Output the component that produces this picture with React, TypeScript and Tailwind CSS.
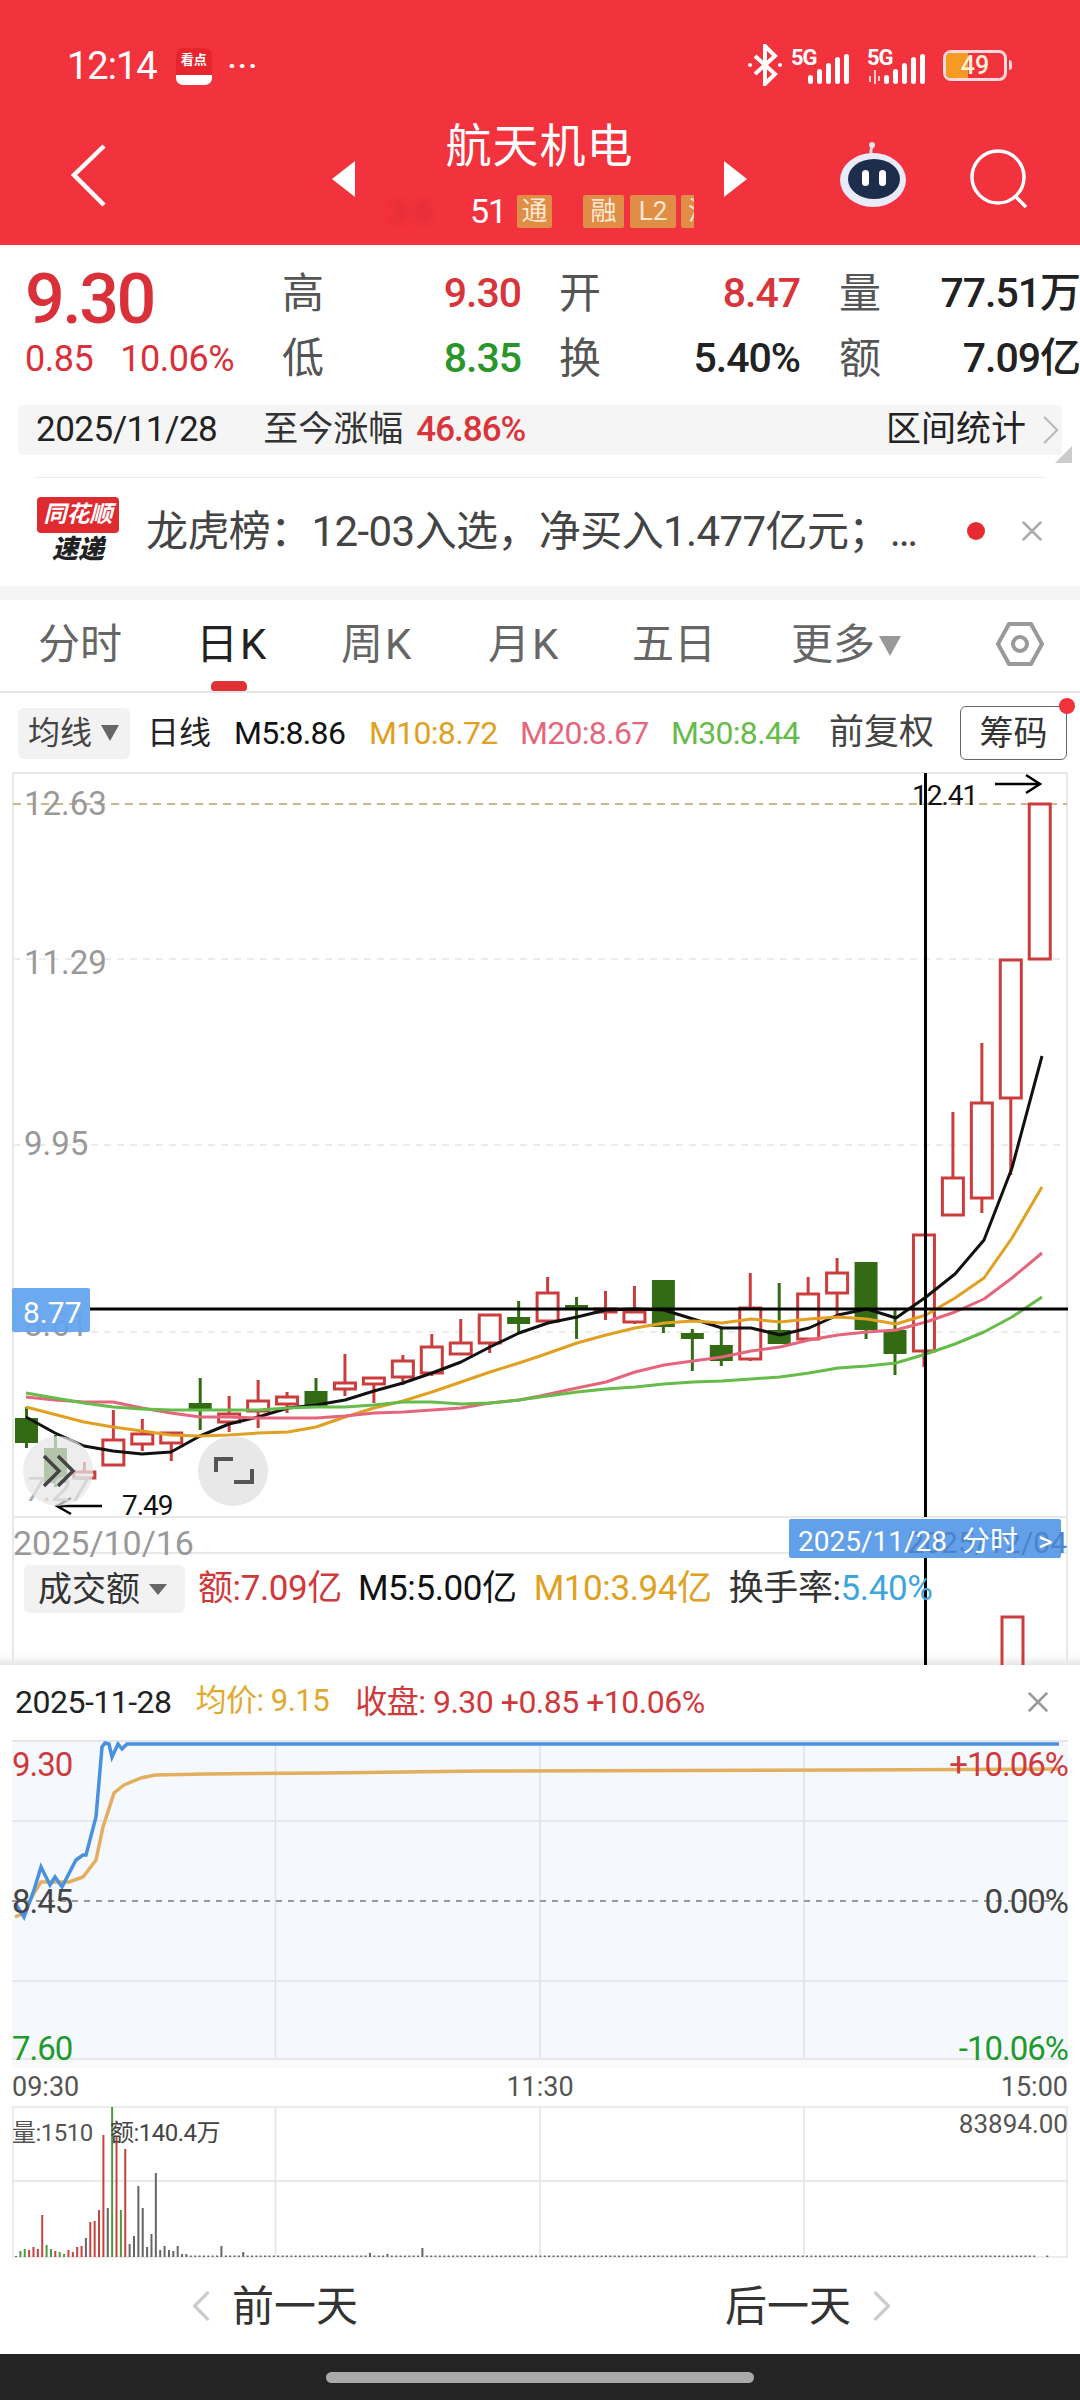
import { ChevronLeft, ChevronRight, X } from "lucide-react";

const RED = "#d8333a";
const ORANGE = "#e0a022";
const PINK = "#e5667c";
const GREEN = "#66bb4a";

// wickTop, wickBottom, bodyTop, bodyBottom, rising
const candles: [number, number, number, number, boolean][] = [
  [1407, 1448, 1418, 1443, false],
  [1435, 1487, 1448, 1483, false],
  [1462, 1480, 1472, 1478, true],
  [1410, 1465, 1440, 1465, true],
  [1419, 1451, 1434, 1444, true],
  [1433, 1461, 1433, 1443, true],
  [1378, 1430, 1403, 1409, false],
  [1396, 1432, 1414, 1422, true],
  [1380, 1428, 1401, 1411, true],
  [1392, 1413, 1397, 1404, true],
  [1378, 1407, 1391, 1406, false],
  [1354, 1396, 1383, 1389, true],
  [1378, 1403, 1378, 1384, true],
  [1355, 1385, 1361, 1377, true],
  [1334, 1376, 1347, 1373, true],
  [1319, 1354, 1343, 1354, true],
  [1315, 1353, 1315, 1343, true],
  [1301, 1333, 1317, 1324, false],
  [1277, 1321, 1293, 1321, true],
  [1297, 1339, 1305, 1309, false],
  [1291, 1320, 1309, 1311, true],
  [1286, 1324, 1312, 1322, true],
  [1280, 1333, 1280, 1327, false],
  [1329, 1371, 1333, 1339, false],
  [1328, 1366, 1345, 1361, false],
  [1273, 1361, 1308, 1359, true],
  [1283, 1344, 1330, 1344, false],
  [1277, 1339, 1294, 1339, true],
  [1258, 1315, 1273, 1293, true],
  [1262, 1339, 1262, 1330, false],
  [1310, 1375, 1330, 1354, false],
  [1235, 1367, 1235, 1351, true],
  [1112, 1215, 1178, 1215, true],
  [1043, 1213, 1103, 1198, true],
  [960, 1175, 960, 1098, true],
  [804, 959, 804, 959, true],
];

const maLines = [
  {
    color: "#111111",
    width: 3,
    points:
      "26,1417 55,1433 84,1446 113,1451 142,1454 171,1452 200,1436 229,1424 258,1417 288,1408 316,1405 345,1400 374,1391 403,1383 432,1373 461,1362 490,1347 519,1333 548,1323 577,1317 606,1310 635,1309 664,1310 693,1319 722,1328 751,1328 780,1335 809,1328 838,1315 867,1309 896,1318 926,1297 955,1274 984,1240 1012,1168 1042,1056",
  },
  {
    color: ORANGE,
    width: 3,
    points:
      "26,1407 84,1422 113,1427 142,1431 171,1435 200,1436 229,1435 258,1433 288,1432 316,1427 345,1417 374,1408 403,1401 432,1392 461,1382 490,1372 519,1363 540,1356 577,1343 606,1335 635,1328 664,1323 693,1321 722,1323 751,1319 780,1322 809,1319 838,1317 867,1319 896,1324 926,1315 955,1298 984,1278 1012,1238 1042,1187",
  },
  {
    color: PINK,
    width: 3,
    points:
      "26,1397 55,1400 84,1402 113,1402 142,1408 171,1413 200,1417 229,1417 258,1418 288,1418 316,1418 345,1416 374,1413 403,1412 432,1410 461,1408 490,1403 519,1400 540,1396 577,1388 606,1382 635,1372 664,1365 693,1361 722,1357 751,1351 780,1347 809,1340 838,1335 867,1332 896,1330 926,1322 955,1312 984,1299 1012,1278 1042,1253",
  },
  {
    color: GREEN,
    width: 3,
    points:
      "26,1393 55,1398 84,1403 113,1407 142,1409 171,1410 200,1410 229,1410 258,1410 288,1408 316,1407 345,1407 374,1405 403,1402 432,1402 461,1404 490,1403 519,1400 540,1397 577,1392 606,1389 635,1387 664,1384 693,1382 722,1381 751,1379 780,1377 809,1373 838,1368 867,1366 896,1363 926,1354 955,1344 984,1332 1012,1317 1042,1297",
  },
];

const bluePath =
  "15,1903 24,1917 34,1890 41,1867 50,1885 55,1877 62,1887 76,1860 83,1855 86,1855 96,1817 102,1747 105,1743 109,1744 112,1757 118,1744 122,1749 127,1744 1059,1744";
const goldPath =
  "15,1917 24,1913 34,1893 41,1882 69,1882 83,1877 96,1860 103,1827 114,1793 124,1785 141,1778 155,1775 207,1774 324,1773 482,1771 847,1770 1059,1769";

// bar heights for the first 40 minutes of the session
const volumes: [number, string][] = [
  [1, "#666"], [6, "#4d9a3a"], [8, "#4d9a3a"], [7, "#c8403f"], [10, "#c8403f"], [8, "#c8403f"],
  [42, "#c8403f"], [12, "#4d9a3a"], [8, "#4d9a3a"], [6, "#c8403f"], [5, "#4d9a3a"], [3, "#4d9a3a"],
  [7, "#c8403f"], [5, "#c8403f"], [10, "#c8403f"], [11, "#c8403f"], [19, "#666"], [35, "#c8403f"],
  [36, "#c8403f"], [47, "#c8403f"], [122, "#c8403f"], [49, "#666"], [150, "#4d9a3a"], [120, "#c8403f"],
  [47, "#4d9a3a"], [108, "#c8403f"], [13, "#666"], [21, "#666"], [71, "#666"], [49, "#666"],
  [10, "#666"], [23, "#666"], [84, "#666"], [7, "#666"], [11, "#666"], [7, "#666"],
  [6, "#666"], [11, "#666"], [3, "#666"], [3, "#666"],
];

function quietVolume(i: number) {
  if (i === 47) return 11;
  if (i === 52) return 5;
  if (i === 81) return 4;
  if (i === 85) return 3;
  if (i === 93) return 9;
  return 1.5;
}

function Signal({ wave }: { wave?: boolean }) {
  return (
    <svg width="64" height="38" viewBox="0 0 64 38" fill="white">
      <text x="0" y="19" fontSize="22" fontWeight="700" letterSpacing="-1">
        5G
      </text>
      {wave && <path d="M3 36v-6M8 38V24M12 35v-5" stroke="white" strokeWidth="1.5" />}
      <rect x="17" y="29" width="5" height="9" rx="2.5" />
      <rect x="26" y="23" width="5" height="15" rx="2.5" />
      <rect x="35" y="17" width="5" height="21" rx="2.5" />
      <rect x="44" y="11" width="5" height="27" rx="2.5" />
      <rect x="53" y="8" width="5" height="30" rx="2.5" />
    </svg>
  );
}

function Robot() {
  return (
    <svg width="70" height="66" viewBox="0 0 70 66">
      <path d="M34 14c-2-4-1-8 1-10" stroke="#f5dfe6" strokeWidth="3" fill="none" />
      <circle cx="34" cy="3" r="3" fill="#f5dfe6" />
      <ellipse cx="35" cy="38" rx="33" ry="27" fill="#e9ecf8" />
      <ellipse cx="36" cy="37" rx="26" ry="20" fill="#1f2d4d" />
      <rect x="24" y="28" width="7" height="16" rx="3.5" fill="white" />
      <rect x="41" y="28" width="7" height="16" rx="3.5" fill="white" />
    </svg>
  );
}

function Badge({ label, width }: { label: string; width: string }) {
  return (
    <span className={`flex h-[33px] shrink-0 items-center justify-center overflow-hidden rounded-[2px] bg-[#e08d45] text-[26px] text-[#fde7d3] ${width}`}>
      {label}
    </span>
  );
}

function Header() {
  return (
    <header className="h-[245px] bg-[#f2323c] text-white">
      <div className="flex h-[120px] items-start justify-between pl-[67px] pr-[68px] pt-[44px]">
        <div className="flex items-center">
          <span className="text-[38px] leading-[44px] tracking-[-1px]">12:14</span>
          <div className="ml-[19px] flex h-[37px] w-[36px] flex-col overflow-hidden rounded-[7px] bg-[#e8242c]">
            <span className="flex-1 text-center text-[13px] font-bold leading-[24px]">看点</span>
            <span className="h-[10px] bg-white" />
          </div>
          <span className="ml-[16px] text-[28px] font-bold leading-[20px] tracking-[2px]">···</span>
        </div>
        <div className="flex items-center">
          <svg width="36" height="42" viewBox="0 0 36 42" fill="none" stroke="white" strokeWidth="4">
            <path d="M8 12l20 18-10 10V2l10 10L8 30" />
            <circle cx="3" cy="21" r="2" fill="white" stroke="none" />
            <circle cx="33" cy="21" r="2" fill="white" stroke="none" />
          </svg>
          <span className="ml-[8px]">
            <Signal />
          </span>
          <span className="ml-[12px]">
            <Signal wave />
          </span>
          <div className="ml-[12px] flex items-center">
            <div className="relative h-[31px] w-[64px] rounded-[8px] border-[3px] border-[#fbd9dc]">
              <div className="h-full w-[22px] rounded-l-[4px] bg-[#f59a23]" />
              <span className="absolute inset-0 text-center text-[25px] font-medium leading-[25px] text-[#fff2d8]">49</span>
            </div>
            <span className="ml-[2px] h-[10px] w-[3px] rounded-r-full bg-[#fbd9dc]" />
          </div>
        </div>
      </div>
      <div className="flex h-[125px] items-start pl-[60px]">
        <svg width="56" height="76" viewBox="0 0 56 76" fill="none" stroke="white" strokeWidth="4.5" className="mt-[18px] shrink-0">
          <path d="M44 8L14 37l30 30" />
        </svg>
        <span className="ml-[216px] mt-[41px] h-0 w-0 border-y-[18px] border-r-[23px] border-y-transparent border-r-white" />
        <div className="flex w-[369px] flex-col items-center">
          <span className="text-[46px] leading-[52px] tracking-[1px]">航天机电</span>
          <div className="mt-[23px] flex w-[339px] items-center self-start overflow-hidden pl-[35px]">
            <span className="w-[80px] shrink-0 text-[30px] leading-[33px] text-[#d92b35] blur-[3px]">3·6</span>
            <span className="w-[36px] shrink-0 text-[34px] leading-[33px] tracking-[-1px]">51</span>
            <span className="ml-[11px] shrink-0"><Badge label="通" width="w-[35px]" /></span>
            <span className="ml-[31px] shrink-0"><Badge label="融" width="w-[41px]" /></span>
            <span className="ml-[6px] shrink-0"><Badge label="L2" width="w-[46px]" /></span>
            <span className="ml-[5px] shrink-0"><Badge label="沪" width="w-[40px]" /></span>
          </div>
        </div>
        <span className="mt-[41px] h-0 w-0 border-y-[18px] border-l-[23px] border-y-transparent border-l-white" />
        <span className="ml-[91px] mt-[22px]">
          <Robot />
        </span>
        <svg width="60" height="62" viewBox="0 0 60 62" fill="none" stroke="white" strokeWidth="3.5" className="ml-[61px] mt-[28px]">
          <circle cx="29" cy="29" r="26" />
          <path d="M46 48l11 11" />
        </svg>
      </div>
    </header>
  );
}

function QuoteCell({ label, value, color, gap }: { label: string; value: string; color: string; gap?: boolean }) {
  return (
    <>
      <span className={`text-[42px] text-[#555] ${gap ? "text-right" : ""}`}>{label}</span>
      <span className={`whitespace-nowrap text-right text-[41px] font-medium tracking-[-1px] ${color}`}>{value}</span>
    </>
  );
}

function Quote() {
  return (
    <section className="h-[341px] overflow-hidden bg-white">
      <div className="flex h-[160px] pt-[16px]">
        <div className="w-[282px] pl-[25px]">
          <div className="text-[70px] font-medium leading-[76px] tracking-[-2.5px] text-[#d9303a]">9.30</div>
          <div className="mt-[1px] flex gap-[27px] text-[36px] leading-[42px] tracking-[-0.5px] text-[#d9303a]">
            <span>0.85</span>
            <span>10.06%</span>
          </div>
        </div>
        <div className="grid h-[130px] grid-cols-[42px_197px_80px_199px_81px_199px] grid-rows-[65px_65px] items-center leading-[65px]">
          <QuoteCell label="高" value="9.30" color="text-[#d9343a]" />
          <QuoteCell label="开" value="8.47" color="text-[#d9343a]" gap />
          <QuoteCell label="量" value="77.51万" color="text-[#222]" gap />
          <QuoteCell label="低" value="8.35" color="text-[#2a962a]" />
          <QuoteCell label="换" value="5.40%" color="text-[#222]" gap />
          <QuoteCell label="额" value="7.09亿" color="text-[#222]" gap />
        </div>
      </div>
      <div className="relative mx-[18px] flex h-[50px] items-center rounded-[4px] bg-[#f5f5f5] pl-[18px] text-[35px] text-[#222]">
        <span className="tracking-[-0.5px]">2025/11/28</span>
        <span className="ml-[46px] text-[#333]">至今涨幅</span>
        <span className="ml-[13px] font-medium tracking-[-1px] text-[#d9343a]">46.86%</span>
        <span className="ml-auto mr-[36px] text-[#222]">区间统计</span>
        <ChevronRight size={50} strokeWidth={1.1} className="absolute right-[-14px] text-[#bbb]" />
        <span className="absolute bottom-[-8px] right-[-10px] h-0 w-0 border-b-[17px] border-l-[17px] border-b-[#ccc] border-l-transparent" />
      </div>
      <div className="mx-[35px] mt-[22px] h-px bg-[#ececec]" />
      <div className="flex h-[106px] items-center pl-[37px]">
        <div className="flex h-[68px] w-[82px] shrink-0 flex-col items-center">
          <span className="w-full rounded-[4px] bg-[#df2a30] text-center text-[23px] font-bold italic leading-[36px] text-white">同花顺</span>
          <span className="text-[26px] font-black italic leading-[32px] text-[#222]">速递</span>
        </div>
        <span className="ml-[27px] w-[785px] shrink-0 whitespace-nowrap text-[42px] tracking-[-0.6px] text-[#444]">
          龙虎榜：12-03入选，净买入1.477亿元；…
        </span>
        <span className="ml-[36px] h-[18px] w-[18px] shrink-0 rounded-full bg-[#e52b30]" />
        <X size={34} strokeWidth={1.8} className="ml-[30px] shrink-0 text-[#aaa]" />
      </div>
    </section>
  );
}

function Tabs() {
  return (
    <nav className="relative h-[107px] border-b-2 border-[#e6e6e6] border-t-[14px] border-t-[#f5f5f5] bg-white text-[42px] leading-[90px] text-[#666]">
      <div className="flex pl-[38px]">
        <span className="w-[158px]">分时</span>
        <span className="w-[145px] text-[#222]">日<span className="ml-[2px]">K</span></span>
        <span className="w-[147px]">周<span className="ml-[2px]">K</span></span>
        <span className="w-[144px]">月<span className="ml-[2px]">K</span></span>
        <span className="w-[159px]">五日</span>
        <span>更多</span>
        <span className="ml-[4px] mt-[36px] h-0 w-0 border-x-[11px] border-t-[20px] border-x-transparent border-t-[#999]" />
        <svg width="50" height="46" viewBox="0 0 50 46" fill="none" stroke="#999" strokeWidth="4" className="ml-[94px] mt-[21px]">
          <path d="M14 3h22l11 20-11 20H14L3 23z" />
          <circle cx="25" cy="23" r="7" />
        </svg>
      </div>
      <span className="absolute bottom-0 left-[211px] h-[10px] w-[36px] rounded-t-[5px] rounded-b-[3px] bg-[#e03236]" />
    </nav>
  );
}

function MaRow() {
  return (
    <div className="flex h-[80px] items-center whitespace-nowrap bg-white pl-[18px] text-[32px]">
      <div className="flex h-[51px] w-[112px] items-center rounded-[6px] bg-[#f2f2f2] pl-[10px] text-[#444]">
        均线
        <span className="ml-[9px] h-0 w-0 border-x-[9px] border-t-[16px] border-x-transparent border-t-[#666]" />
      </div>
      <span className="ml-[17px] w-[62px] text-[#222]">日线</span>
      <span className="ml-[25px] w-[110px] tracking-[-0.7px] text-[#111]">M5:8.86</span>
      <span className="ml-[25px] w-[126px] tracking-[-0.7px] text-[#e0a022]">M10:8.72</span>
      <span className="ml-[25px] w-[126px] tracking-[-0.7px] text-[#e5667c]">M20:8.67</span>
      <span className="ml-[25px] w-[126px] tracking-[-0.7px] text-[#66bb4a]">M30:8.44</span>
      <span className="ml-[32px] w-[106px] text-[35px] text-[#444]">前复权</span>
      <div className="relative ml-[25px] flex h-[54px] w-[107px] items-center justify-center rounded-[6px] border border-[#666] text-[34px] text-[#333]">
        筹码
        <span className="absolute right-[-9px] top-[-9px] h-[16px] w-[16px] rounded-full bg-[#f2323c]" />
      </div>
    </div>
  );
}

function KLineChart() {
  return (
    <svg width="1080" height="780" viewBox="0 773 1080 780" className="block overflow-visible">
      <rect x="13" y="773" width="1054" height="744" fill="none" stroke="#e8e8e8" strokeWidth="2" />
      <line x1="13" x2="1067" y1="1553" y2="1553" stroke="#e8e8e8" strokeWidth="2" />
      <line x1="13" x2="13" y1="1517" y2="1553" stroke="#e8e8e8" strokeWidth="2" />
      <line x1="1067" x2="1067" y1="1517" y2="1553" stroke="#e8e8e8" strokeWidth="2" />
      <line x1="13" x2="1067" y1="804" y2="804" stroke="#c9b98c" strokeWidth="2" strokeDasharray="8 6" />
      {[959, 1145, 1332].map((y) => (
        <line key={y} x1="13" x2="1067" y1={y} y2={y} stroke="#e6e6e6" strokeWidth="1.5" strokeDasharray="7 6" />
      ))}
      <g fill="#999" fontSize="33">
        <text x="24" y="815">12.63</text>
        <text x="24" y="974">11.29</text>
        <text x="24" y="1155">9.95</text>
        <text x="24" y="1336" fill="#999">8.61</text>
      </g>

      {candles.map(([wt, wb, bt, bb, up], i) => {
        const x = 26.5 + i * 28.95;
        const color = up ? "#cb3d3d" : "#336b14";
        return (
          <g key={i}>
            <line x1={x} x2={x} y1={wt} y2={up ? bt : wb} stroke={color} strokeWidth="3" />
            {up && <line x1={x} x2={x} y1={bb} y2={wb} stroke={color} strokeWidth="3" />}
            <rect
              x={up ? x - 10.5 : x - 11.5}
              y={bt}
              width={up ? 21 : 23}
              height={Math.max(bb - bt, 3)}
              fill={up ? "white" : color}
              stroke={up ? color : "none"}
              strokeWidth="3"
            />
          </g>
        );
      })}
      {maLines.map((l) => (
        <polyline key={l.color} points={l.points} fill="none" stroke={l.color} strokeWidth={l.width} strokeLinejoin="round" />
      ))}

      <line x1="90" x2="1068" y1="1309" y2="1309" stroke="#000" strokeWidth="3" />
      <line x1="925.5" x2="925.5" y1="773" y2="1517" stroke="#000" strokeWidth="3" />
      <rect x="12" y="1288" width="78" height="44" rx="2" fill="#63a4ee" fillOpacity="0.94" />
      <text x="23" y="1323" fill="white" fontSize="30">8.77</text>

      <text x="912" y="805" fill="#111" fontSize="28" letterSpacing="-1">12.41</text>
      <path d="M995 784h45M1026 775l14 9-14 9" fill="none" stroke="#000" strokeWidth="2.5" />
      <path d="M102 1506H58M71 1498l-14 8 14 8" fill="none" stroke="#000" strokeWidth="2.5" />
      <text x="122" y="1515" fill="#111" fontSize="28" letterSpacing="-1">7.49</text>
      <text x="26" y="1501" fill="#aaa" fontSize="33" fontStyle="italic">7.27</text>

      <circle cx="58" cy="1471" r="35" fill="#e6e6e6" fillOpacity="0.72" />
      <path d="M44 1456l15 15-15 15M58 1456l15 15-15 15" fill="none" stroke="#444" strokeWidth="3.5" />
      <circle cx="233" cy="1471" r="35" fill="#e8e8e8" />
      <path d="M216 1472v-13h17M252 1469v13h-18" fill="none" stroke="#555" strokeWidth="4" />

      <text x="13" y="1555" fill="#999" fontSize="34">2025/10/16</text>
      <rect x="789" y="1519" width="272" height="39" rx="2" fill="#63a0ea" />
      <text x="1067" y="1553" textAnchor="end" fill="#4d84c8" fontSize="30">2025/12/04</text>
      <g fill="white" fontSize="28">
        <text x="798" y="1551">2025/11/28</text>
        <text x="962" y="1551">分时</text>
        <text x="1038" y="1551">&gt;</text>
      </g>
    </svg>
  );
}

function VolumeRow() {
  return (
    <div className="relative flex h-[112px] items-start overflow-hidden pl-[24px] pt-[12px] text-[35px] shadow-[inset_0_-14px_12px_-12px_rgba(0,0,0,0.16)]">
      <svg width="1080" height="112" viewBox="0 1553 1080 112" className="absolute left-0 top-0">
        <line x1="13" x2="13" y1="1553" y2="1665" stroke="#e8e8e8" strokeWidth="2" />
        <line x1="1067" x2="1067" y1="1553" y2="1665" stroke="#e8e8e8" strokeWidth="2" />
        <line x1="925.5" x2="925.5" y1="1558" y2="1665" stroke="#000" strokeWidth="3" />
        <path d="M1002 1665v-48h21v48" fill="none" stroke="#cb3d3d" strokeWidth="3" />
      </svg>
      <div className="relative flex h-[48px] w-[161px] items-center rounded-[6px] bg-[#f2f2f2] pl-[14px] text-[34px] text-[#333]">
        成交额
        <span className="ml-[9px] h-0 w-0 border-x-[9px] border-t-[11px] border-x-transparent border-t-[#666]" />
      </div>
      <div className="relative ml-[13px] flex h-[48px] items-center whitespace-nowrap tracking-[-0.4px]">
        <span className="text-[#d0393c]">额:7.09亿</span>
        <span className="ml-[16px] text-[#111]">M5:5.00亿</span>
        <span className="ml-[17px] text-[#e0a022]">M10:3.94亿</span>
        <span className="ml-[17px] text-[#333]">换手率:<span className="text-[#3fa6dc]">5.40%</span></span>
      </div>
    </div>
  );
}

function MinuteSheet() {
  return (
    <section className="relative bg-white">
      <div className="flex h-[73px] items-center whitespace-nowrap pl-[15px] text-[32px] tracking-[-0.5px] text-[#222]">
        <span>2025-11-28</span>
        <span className="ml-[24px] text-[31px] text-[#e0a92e]">均价: 9.15</span>
        <span className="ml-[26px] text-[#d0393c]">收盘: 9.30 +0.85 +10.06%</span>
        <X size={34} strokeWidth={1.8} className="ml-auto mr-[25px] text-[#999]" />
      </div>
      <svg width="1080" height="330" viewBox="0 1738 1080 330" className="block">
        <rect x="12" y="1742" width="1056" height="317" fill="#f5f9fd" />
        <rect x="12" y="2059" width="1056" height="9" fill="#fafafa" />
        <g stroke="#dde2ea" strokeWidth="1.5">
          <line x1="12" x2="1068" y1="1821" y2="1821" />
          <line x1="12" x2="1068" y1="1981" y2="1981" />
          <line x1="275.5" x2="275.5" y1="1742" y2="2059" />
          <line x1="540" x2="540" y1="1742" y2="2059" />
          <line x1="804" x2="804" y1="1742" y2="2059" />
        </g>
        <line x1="12" x2="1068" y1="2059" y2="2059" stroke="#e8e8ec" strokeWidth="2" />
        <line x1="12" x2="1068" y1="1741" y2="1741" stroke="#e6e6e6" strokeWidth="2" />
        <line x1="12" x2="1068" y1="1901" y2="1901" stroke="#999" strokeWidth="2" strokeDasharray="6 6" />
        <polyline points={goldPath} fill="none" stroke="#e3ae5d" strokeWidth="3.5" />
        <polyline points={bluePath} fill="none" stroke="#4a90e0" strokeWidth="3.5" />
        <g fontSize="33" letterSpacing="-1">
          <text x="12" y="1776" fill="#d0393c">9.30</text>
          <text x="1068" y="1776" fill="#d0393c" textAnchor="end">+10.06%</text>
          <text x="12" y="1913" fill="#444">8.45</text>
          <text x="1068" y="1913" fill="#444" textAnchor="end">0.00%</text>
          <text x="12" y="2060" fill="#1f9a2c">7.60</text>
          <text x="1068" y="2060" fill="#1f9a2c" textAnchor="end">-10.06%</text>
        </g>
      </svg>
      <div className="flex h-[38px] items-center justify-between px-[12px] text-[27px] text-[#555]">
        <span>09:30</span>
        <span>11:30</span>
        <span>15:00</span>
      </div>
      <svg width="1080" height="152" viewBox="0 2106 1080 152" className="block">
        <rect x="13" y="2107" width="1054" height="150" fill="none" stroke="#ececec" strokeWidth="2" />
        <g stroke="#dfe2e6" strokeWidth="1.5">
          <line x1="12" x2="1068" y1="2181" y2="2181" />
          <line x1="275.5" x2="275.5" y1="2107" y2="2257" />
          <line x1="540" x2="540" y1="2107" y2="2257" />
          <line x1="804" x2="804" y1="2107" y2="2257" />
        </g>
        {Array.from({ length: 237 }, (_, i) => {
          const v = volumes[i];
          const h = v ? v[0] : quietVolume(i);
          if (i > 233 && i < 236) return null;
          return <rect key={i} x={15 + i * 4.37} y={2257 - h} width="2" height={h} fill={v ? v[1] : "#666"} />;
        })}
        <text x="12" y="2141" fill="#555" fontSize="24" letterSpacing="-0.5">量:1510</text>
        <text x="110" y="2141" fill="#444" fontSize="24" letterSpacing="-0.5">额:140.4万</text>
        <text x="1068" y="2133" fill="#555" fontSize="26" textAnchor="end">83894.00</text>
      </svg>
      <div className="flex h-[96px] items-center text-[42px] text-[#333]">
        <ChevronLeft size={52} strokeWidth={1.5} className="ml-[175px] text-[#ccc]" />
        <span className="ml-[5px]">前一天</span>
        <span className="ml-[367px]">后一天</span>
        <ChevronRight size={52} strokeWidth={1.5} className="ml-[5px] text-[#ccc]" />
      </div>
      <div className="flex h-[46px] items-center justify-center bg-[#242424]">
        <span className="h-[11px] w-[428px] rounded-full bg-[#aaaaaa]" />
      </div>
    </section>
  );
}

export default function App() {
  return (
    <div className="h-[2400px] w-[1080px] overflow-hidden bg-white font-[Roboto,'Noto_Sans_CJK_SC',sans-serif]">
      <Header />
      <Quote />
      <Tabs />
      <MaRow />
      <KLineChart />
      <VolumeRow />
      <MinuteSheet />
    </div>
  );
}
